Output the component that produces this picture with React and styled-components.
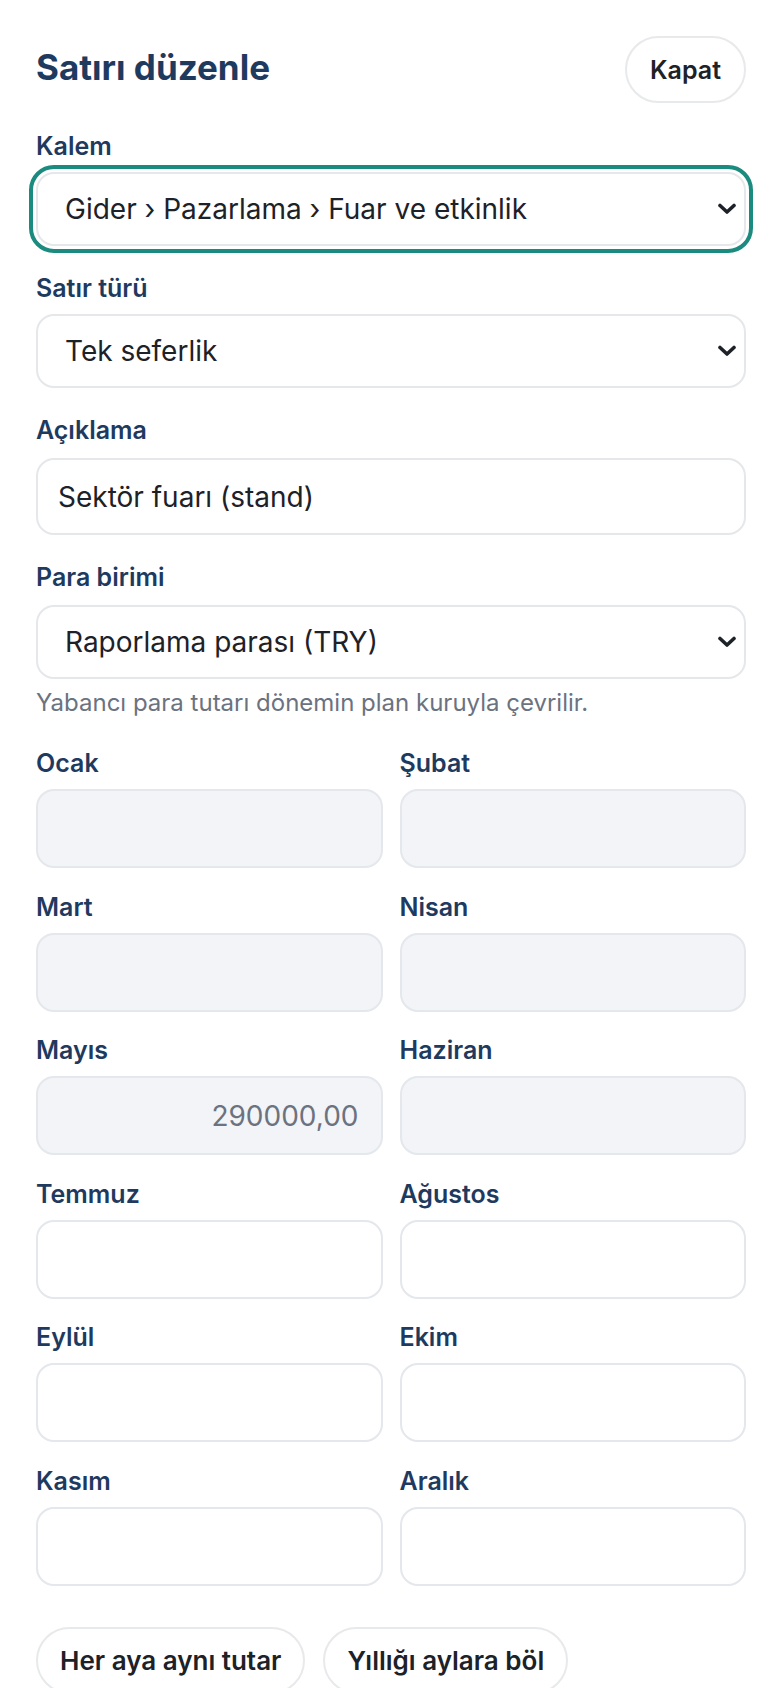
import styled, { createGlobalStyle } from "styled-components";

const GlobalStyle = createGlobalStyle`
  * {
    box-sizing: border-box;
  }
  body {
    margin: 0;
    background: #ffffff;
    font-family: Inter, "Liberation Sans", sans-serif;
  }
`;

const Page = styled.div`
  padding: 36px 34px 40px 36px;
  background: #ffffff;
`;

const Header = styled.div`
  display: flex;
  align-items: center;
  justify-content: space-between;
  margin-bottom: 28px;
`;

const Title = styled.h1`
  margin: 0 0 6px;
  font-size: 35px;
  font-weight: 700;
  color: #1f3a5f;
`;

const PillButton = styled.button`
  height: 67px;
  padding: 0 ${(p) => p.$pad ?? 22}px;
  border: 2px solid #e8e9eb;
  border-radius: 999px;
  background: #ffffff;
  color: #1d2128;
  font-family: inherit;
  font-size: ${(p) => p.$size ?? 25}px;
  font-weight: 600;
  cursor: pointer;
`;

const Field = styled.div`
  display: flex;
  flex-direction: column;
  gap: ${(p) => p.$gap ?? 11}px;
  margin-bottom: ${(p) => p.$space ?? 27}px;
`;

const Label = styled.label`
  display: block;
  font-size: 25px;
  line-height: 30px;
  font-weight: 600;
  color: #1e3a5f;
`;

const SelectWrap = styled.div`
  position: relative;
  border-radius: 18px;
  outline: ${(p) => (p.$focused ? "4px solid #1b8a7f" : "none")};
  outline-offset: 3px;
`;

const Select = styled.select`
  appearance: none;
  -webkit-appearance: none;
  display: block;
  width: 100%;
  height: 74px;
  padding: 0 48px 0 27px;
  border: 2px solid #e5e7ea;
  border-radius: 18px;
  background: #ffffff;
  color: #1d2128;
  font-family: inherit;
  font-size: 28px;
  outline: none;
`;

const Chevron = styled.svg`
  position: absolute;
  right: 9px;
  top: 50%;
  width: 20px;
  height: 12px;
  margin-top: -6px;
  pointer-events: none;
`;

const TextInput = styled.input`
  width: 100%;
  height: 77px;
  padding: 0 20px;
  border: 2px solid #e5e7ea;
  border-radius: 18px;
  background: #ffffff;
  color: #1d2128;
  font-family: inherit;
  font-size: 28px;
  outline: none;
`;

const Hint = styled.p`
  margin: 9px 0 30px;
  font-size: 24px;
  line-height: 30px;
  color: #6b7280;
`;

const MonthGrid = styled.div`
  display: grid;
  grid-template-columns: 1fr 1fr;
  column-gap: 17px;
  row-gap: 23.5px;
`;

const MonthInput = styled.input`
  width: 100%;
  height: 79px;
  padding: 0 22px;
  border: 2px solid #e4e7eb;
  border-radius: 18px;
  background: ${(p) => (p.disabled ? "#f2f4f8" : "#ffffff")};
  color: #6b7280;
  font-family: inherit;
  font-size: 28px;
  text-align: right;
  outline: none;
  -webkit-text-fill-color: #6b7280;
  opacity: 1;
`;

const Actions = styled.div`
  display: flex;
  gap: 18px;
  margin-top: 41px;
`;

const months = [
  { name: "Ocak", locked: true },
  { name: "Şubat", locked: true },
  { name: "Mart", locked: true },
  { name: "Nisan", locked: true },
  { name: "Mayıs", locked: true, value: "290000,00" },
  { name: "Haziran", locked: true },
  { name: "Temmuz" },
  { name: "Ağustos" },
  { name: "Eylül" },
  { name: "Ekim" },
  { name: "Kasım" },
  { name: "Aralık" },
];

const Dropdown = ({ focused, options }) => (
  <SelectWrap $focused={focused}>
    <Select defaultValue={options[0]}>
      {options.map((o) => (
        <option key={o} value={o}>
          {o}
        </option>
      ))}
    </Select>
    <Chevron viewBox="0 0 20 12">
      <polyline
        points="3,2.5 10,9 17,2.5"
        fill="none"
        stroke="#1d2128"
        strokeWidth="3.6"
        strokeLinecap="round"
        strokeLinejoin="round"
      />
    </Chevron>
  </SelectWrap>
);

const App = () => {
  return (
    <Page>
      <GlobalStyle />
      <Header>
        <Title>Satırı düzenle</Title>
        <PillButton $pad={23}>Kapat</PillButton>
      </Header>

      <Field>
        <Label>Kalem</Label>
        <Dropdown focused options={["Gider › Pazarlama › Fuar ve etkinlik"]} />
      </Field>

      <Field>
        <Label>Satır türü</Label>
        <Dropdown options={["Tek seferlik", "Aylık tekrar"]} />
      </Field>

      <Field $gap={13}>
        <Label>Açıklama</Label>
        <TextInput defaultValue="Sektör fuarı (stand)" />
      </Field>

      <Field $gap={13} $space={0}>
        <Label>Para birimi</Label>
        <Dropdown options={["Raporlama parası (TRY)", "EUR", "USD"]} />
      </Field>
      <Hint>Yabancı para tutarı dönemin plan kuruyla çevrilir.</Hint>

      <MonthGrid>
        {months.map((m) => (
          <Field key={m.name} $space={0}>
            <Label>{m.name}</Label>
            <MonthInput disabled={m.locked} defaultValue={m.value || ""} />
          </Field>
        ))}
      </MonthGrid>

      <Actions>
        <PillButton $size={26}>Her aya aynı tutar</PillButton>
        <PillButton $size={26}>Yıllığı aylara böl</PillButton>
      </Actions>
    </Page>
  );
};

export default App;
